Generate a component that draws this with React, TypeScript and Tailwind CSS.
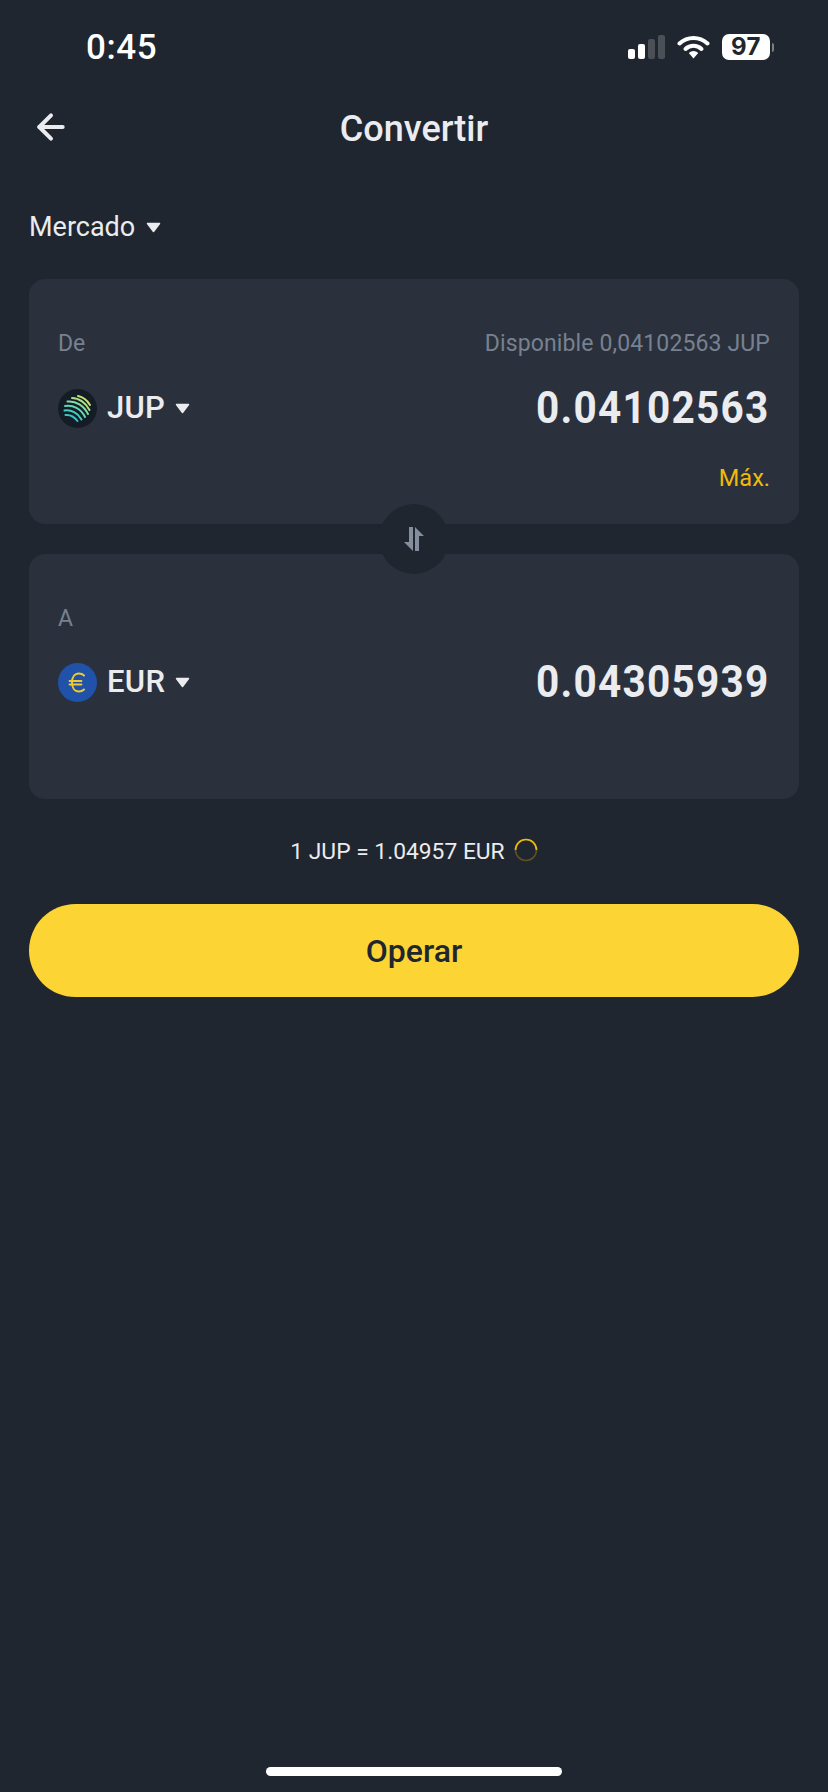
import { ArrowLeft } from 'lucide-react';

function Caret() {
  return (
    <svg width="15" height="11" viewBox="0 0 15 11" className="shrink-0">
      <path d="M1.5 1.5 H13.5 L7.5 9.5 Z" fill="#eaecef" stroke="#eaecef" strokeWidth="1.5" strokeLinejoin="round" />
    </svg>
  );
}

function JupIcon() {
  return (
    <svg width="39" height="39" viewBox="0 0 39 39" fill="none" className="shrink-0">
      <circle cx="19.5" cy="19.5" r="19.5" fill="#141d26" />
      <path d="M20 7 C25 8 29 11 32 16" stroke="#c7e36b" strokeWidth="2" strokeLinecap="round" />
      <path d="M14 9 C21 9 28 14 31.5 21" stroke="#a9e08a" strokeWidth="2" strokeLinecap="round" />
      <path d="M9.5 12.5 C18 11.5 26 17 30 25" stroke="#84dca0" strokeWidth="2" strokeLinecap="round" />
      <path d="M7 17 C15 15.5 23 20 27 28" stroke="#5fd7b5" strokeWidth="2" strokeLinecap="round" />
      <path d="M6.5 21.5 C13 20.5 20 24 23.5 30.5" stroke="#42cfc2" strokeWidth="2" strokeLinecap="round" />
      <path d="M7.5 26 C12 25.5 16.5 28 19.5 32" stroke="#38c4c8" strokeWidth="2" strokeLinecap="round" />
    </svg>
  );
}

function EurIcon() {
  return (
    <svg width="39" height="39" viewBox="0 0 39 39" fill="none" className="shrink-0">
      <circle cx="19.5" cy="19.5" r="19.5" fill="#1f52a8" />
      <path d="M26 12.5 C24.5 11 23 10.5 21 10.5 C16.5 10.5 14 14.5 14 19.5 C14 24.5 16.5 28.5 21 28.5 C23 28.5 24.5 28 26 26.5" stroke="#f0c92e" strokeWidth="2" strokeLinecap="round" />
      <path d="M11.5 18 H23.5 M11.5 21.5 H23.5" stroke="#f0c92e" strokeWidth="1.8" strokeLinecap="round" />
    </svg>
  );
}

function Signal() {
  return (
    <div className="flex items-end gap-[3px] h-[24px]">
      <div className="w-[7px] h-[10px] rounded-[2px] bg-white" />
      <div className="w-[7px] h-[15px] rounded-[2px] bg-white" />
      <div className="w-[7px] h-[20px] rounded-[2px] bg-[#4b4f56]" />
      <div className="w-[7px] h-[24px] rounded-[2px] bg-[#4b4f56]" />
    </div>
  );
}

function Wifi() {
  return (
    <svg width="33" height="24" viewBox="0 0 33 24" fill="none">
      <path d="M2.5 8.5 C10.5 1 22.5 1 30.5 8.5" stroke="#fff" strokeWidth="4" strokeLinecap="round" />
      <path d="M8.5 14 C13 9.8 20 9.8 24.5 14" stroke="#fff" strokeWidth="4" strokeLinecap="round" />
      <path d="M11.8 18 C14.5 15.3 18.5 15.3 21.2 18 L16.5 23.5 Z" fill="#fff" />
    </svg>
  );
}

function TokenRow({ icon, name, value }: { icon: React.ReactNode; name: string; value: string }) {
  return (
    <div className="flex items-center justify-between h-[46px]">
      <div className="flex items-center">
        {icon}
        <span className="ml-[10px] mr-[10px] text-[31px] font-medium tracking-[0.3px] text-[#eaecef]">{name}</span>
        <Caret />
      </div>
      <span className="origin-right scale-x-[0.9] text-[45px] font-bold tracking-[1.4px] text-[#eaecef] mr-[1px]">{value}</span>
    </div>
  );
}

export default function App() {
  return (
    <div className="relative w-[828px] h-[1792px] overflow-hidden bg-[#1f2630] font-['Roboto',sans-serif]">
      {/* status bar */}
      <div className="flex items-center justify-between h-[94px] pl-[86px] pr-[54px]">
        <span className="mt-[2px] text-[35px] font-medium text-white tracking-[0.6px]">0:45</span>
        <div className="flex items-center gap-[12px]">
          <Signal />
          <Wifi />
          <div className="flex items-center gap-[2px]">
            <div className="flex items-center justify-center w-[48px] h-[26px] rounded-[7px] bg-white text-[24px] font-bold tracking-[0.5px] text-[#1f2630] font-['Inter',sans-serif]">97</div>
            <div className="w-[2px] h-[9px] rounded-r-[2px] bg-[#7a7e85]" />
          </div>
        </div>
      </div>

      {/* header */}
      <div className="relative flex items-center justify-center h-[68px] mt-[1px]">
        <ArrowLeft size={40} strokeWidth={2.4} color="#eaecef" className="absolute left-[31px] top-[12px]" />
        <span className="text-[36px] font-medium text-[#eaecef]">Convertir</span>
      </div>

      <div className="flex items-center gap-[11px] px-[29px] mt-[44px] h-[40px]">
        <span className="text-[27px] text-[#eaecef]">Mercado</span>
        <Caret />
      </div>

      {/* cards */}
      <div className="relative flex flex-col gap-[30px] mx-[29px] mt-[32px]">
        <div className="h-[245px] rounded-[16px] bg-[#2a313d] px-[29px] pt-[50px]">
          <div className="flex items-center justify-between h-[30px] text-[23px] text-[#78818f]">
            <span>De</span>
            <span className="tracking-[0.13px]">Disponible 0,04102563 JUP</span>
          </div>
          <div className="mt-[26px]">
            <TokenRow icon={<JupIcon />} name="JUP" value="0.04102563" />
          </div>
          <div className="mt-[30px] text-right text-[23.5px] text-[#f0b90b]">Máx.</div>
        </div>

        <div className="h-[245px] rounded-[16px] bg-[#2a313d] px-[29px] pt-[50px]">
          <div className="flex items-center h-[30px] text-[23px] text-[#78818f]">A</div>
          <div className="mt-[25px]">
            <TokenRow icon={<EurIcon />} name="EUR" value="0.04305939" />
          </div>
        </div>

        {/* swap button sits across the two cards */}
        <div className="absolute left-1/2 top-[260px] -translate-x-1/2 -translate-y-1/2 flex items-center justify-center size-[70px] rounded-full bg-[#1f2630]">
          <svg width="22" height="26" viewBox="0 0 22 26" fill="#848e9c">
            <path d="M6 1 H10 V25 L1 16 H6 Z" />
            <path d="M12 1 L21 10 H16 V25 H12 Z" />
          </svg>
        </div>
      </div>

      {/* rate */}
      <div className="flex items-center justify-center gap-[9px] h-[32px] mt-[37px] text-[22.8px] text-[#eaecef]">
        <span>1 JUP = 1.04957 EUR</span>
        <svg width="24" height="24" viewBox="0 0 24 24" fill="none" className="mt-[-4px]">
          <circle cx="12" cy="12" r="10.5" stroke="#f0b90b" strokeOpacity="0.3" strokeWidth="1.6" />
          <path d="M1.5 12 A10.5 10.5 0 1 1 22.5 12" stroke="#f0b90b" strokeWidth="1.6" />
        </svg>
      </div>

      <div className="flex items-center justify-center h-[93px] mx-[29px] mt-[36px] rounded-full bg-[#fcd535] text-[32px] font-medium text-[#1f2630]">
        Operar
      </div>

      {/* home indicator */}
      <div className="absolute left-1/2 bottom-[16px] -translate-x-1/2 w-[296px] h-[9px] rounded-full bg-white" />
    </div>
  );
}
